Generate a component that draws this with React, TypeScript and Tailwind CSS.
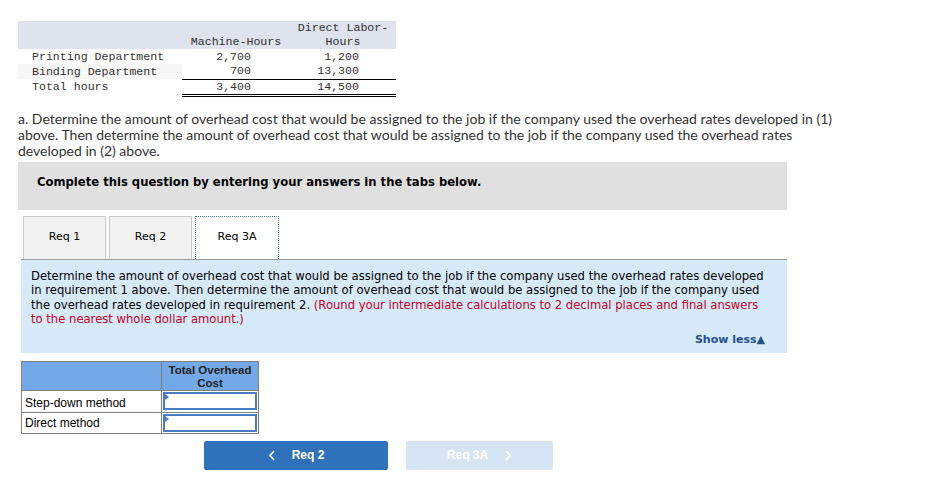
import React from 'react';

const mono = { fontFamily: '"Liberation Mono", "Courier New", monospace' };
const verdana = { fontFamily: '"DejaVu Sans", Verdana, sans-serif' };

const HOURS = [
  { dept: 'Printing Department', mh: '2,700', dl: '1,200' },
  { dept: 'Binding Department', mh: '700', dl: '13,300' },
];

function HoursTable() {
  return (
    <table className="border-collapse text-[11.6px] text-[#333] w-[378px]" style={mono}>
      <thead>
        <tr className="bg-[#dee3ee] h-[28px]">
          <th className="w-[164px]"></th>
          <th className="w-[108px] font-normal align-bottom leading-[14px]">Machine-Hours</th>
          <th className="w-[106px] font-normal align-bottom leading-[14px]">
            Direct Labor-
            <br />
            Hours
          </th>
        </tr>
      </thead>
      <tbody>
        {HOURS.map((r, i) => (
          <tr key={r.dept} className="h-[15px] leading-[14px]">
            <td className={`pl-[14px] ${i === 1 ? 'bg-[#f7f7f7]' : ''}`}>{r.dept}</td>
            <td className={`text-right pr-[39px] ${i === 1 ? 'border-b border-black' : ''}`}>{r.mh}</td>
            <td className={`text-right pr-[37px] ${i === 1 ? 'border-b border-black' : ''}`}>{r.dl}</td>
          </tr>
        ))}
        <tr className="h-[15px] leading-[14px]">
          <td className="pl-[14px]">Total hours</td>
          <td className="text-right pr-[39px] border-b-[3px] border-double border-black">3,400</td>
          <td className="text-right pr-[37px] border-b-[3px] border-double border-black">14,500</td>
        </tr>
      </tbody>
    </table>
  );
}

function Tab({ label, active }: { label: string; active?: boolean }) {
  return (
    <div
      className={`h-[43px] flex items-center justify-center text-[11px] text-black ${
        active
          ? 'w-[84px] bg-white border border-dotted border-[#3b73b9] border-b-0 -mb-px relative z-10'
          : 'w-[83px] bg-[#f2f2f2] border border-[#c9c9c9] border-b-0'
      }`}
      style={verdana}
    >
      {label}
    </div>
  );
}

function InputCell() {
  return (
    <td className="border border-[#7f7f7f] p-px w-[97px]">
      <div className="relative h-[18px] border-2 border-[#4a7cc4] bg-white">
        <span className="absolute left-0 top-0 w-0 h-0 border-t-[3px] border-b-[3px] border-l-[4px] border-t-transparent border-b-transparent border-l-[#4a7cc4]"></span>
      </div>
    </td>
  );
}

export default function App() {
  return (
    <div className="w-[933px] h-[480px] bg-white overflow-hidden pl-[18px] pt-[21px]">
      <HoursTable />

      {/* Question */}
      <p
        className="mt-[14px] text-[14px] leading-[16px] text-[#333] w-[835px]"
        style={{ fontFamily: 'Lato, "Open Sans", sans-serif' }}
      >
        a. Determine the amount of overhead cost that would be assigned to the job if the company used the overhead rates developed in (1) above. Then determine the amount of overhead cost that would be assigned to the job if the company used the overhead rates developed in (2) above.
      </p>

      <div
        className="mt-[3px] w-[769px] h-[48px] bg-[#e0e0e0] pl-[19px] pt-[12px] text-[11.6px] font-bold text-black"
        style={verdana}
      >
        Complete this question by entering your answers in the tabs below.
      </div>

      {/* Tabs */}
      <div className="ml-[3px] mt-[6px] w-[766px]">
        <div className="flex gap-[3px] pl-[2px] border-b border-[#9a9a9a]">
          <Tab label="Req 1" />
          <Tab label="Req 2" />
          <Tab label="Req 3A" active />
        </div>

        <div
          className="bg-[#d7eaf9] h-[93px] pl-[10px] pr-[14px] pt-[9px] text-[11.6px] leading-[14.5px] text-black"
          style={verdana}
        >
          <p>
            Determine the amount of overhead cost that would be assigned to the job if the company used the overhead rates developed in requirement 1 above. Then determine the amount of overhead cost that would be assigned to the job if the company used the overhead rates developed in requirement 2.{' '}
            <span className="text-[#c8001e]">
              (Round your intermediate calculations to 2 decimal places and final answers to the nearest whole dollar amount.)
            </span>
          </p>
          <div className="flex justify-end mt-[6px] pr-[8px]">
            <span className="text-[11px] font-bold text-[#1f4f8e]">Show less▲</span>
          </div>
        </div>

        {/* Answer table */}
        <table
          className="mt-[8px] border-collapse text-[12px] text-black"
          style={{ fontFamily: '"Liberation Sans", Arial, sans-serif' }}
        >
          <thead>
            <tr className="bg-[#72a9e6] h-[29px]">
              <th className="border border-[#7f7f7f] w-[140px]"></th>
              <th className="border border-[#7f7f7f] w-[97px] text-[11.5px] leading-[13px] font-bold text-[#222] align-top pt-[2px]">
                Total Overhead
                <br />
                Cost
              </th>
            </tr>
          </thead>
          <tbody>
            <tr className="h-[21px]">
              <td className="border border-[#7f7f7f] pl-[3px] pt-[3px]">Step-down method</td>
              <InputCell />
            </tr>
            <tr className="h-[21px]">
              <td className="border border-[#7f7f7f] pl-[3px]">Direct method</td>
              <InputCell />
            </tr>
          </tbody>
        </table>

        {/* Nav buttons */}
        <div
          className="flex gap-[18px] ml-[183px] mt-[7px] text-[12px] font-bold"
          style={{ fontFamily: '"Liberation Sans", Arial, sans-serif' }}
        >
          <button className="w-[184px] h-[29px] rounded-[2px] bg-[#3071bb] text-white flex items-center justify-center gap-[16px]">
            <svg width="8" height="11" viewBox="0 0 8 11" fill="none" stroke="white" strokeWidth="1.6">
              <path d="M6 1 L2 5.5 L6 10" />
            </svg>
            <span>Req 2</span>
          </button>
          <button className="w-[147px] h-[29px] rounded-[2px] bg-[#d6e4f4] text-white flex items-center justify-center gap-[16px]">
            <span>Req 3A</span>
            <svg width="8" height="11" viewBox="0 0 8 11" fill="none" stroke="white" strokeWidth="1.6">
              <path d="M2 1 L6 5.5 L2 10" />
            </svg>
          </button>
        </div>
      </div>
    </div>
  );
}
